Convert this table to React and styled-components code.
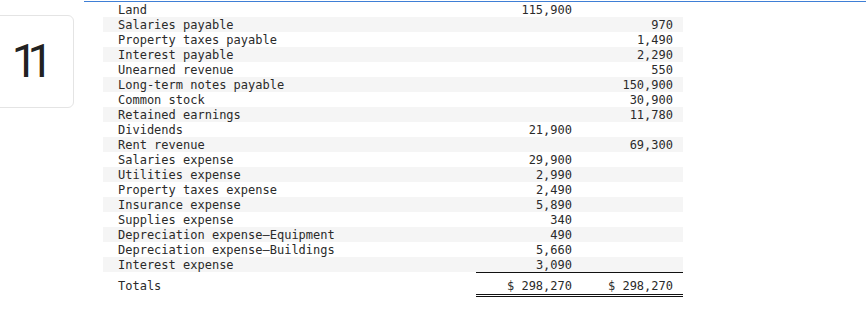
import React from "react";
import styled, { createGlobalStyle } from "styled-components";

const Global = createGlobalStyle`
  html, body { margin: 0; padding: 0; background: #fff; }
  body { width: 866px; height: 312px; overflow: hidden; }
`;

const Page = styled.div`
  display: flex;
  align-items: flex-start;
  gap: 10px;
  width: 866px;
  height: 312px;
`;

const NumberBox = styled.div`
  flex: 0 0 auto;
  width: 83px;
  height: 93px;
  margin-top: 15px;
  margin-left: -9px;
  box-sizing: border-box;
  border: 1px solid #e4e4e4;
  border-radius: 6px;
  display: flex;
  align-items: center;
  justify-content: center;
  font-family: Roboto, "Liberation Sans", Arial, sans-serif;
  font-size: 46px;
  letter-spacing: -10px;
  color: #222;
  padding-right: 10px;
  padding-bottom: 1px;
`;

const Panel = styled.div`
  flex: 1;
  margin-top: 1px;
  border-top: 1px solid #3f7fd6;
`;

const Table = styled.div`
  width: 580px;
  margin-left: 19px;
  font-family: "DejaVu Sans Mono", "Liberation Mono", monospace;
  font-size: 12px;
  color: #2a2a2a;
`;

const Row = styled.div`
  display: grid;
  grid-template-columns: 373px 104px 103px;
  box-sizing: border-box;
  height: ${(p) => (p.$total ? "21px" : "15px")};
  padding-top: 1px;
  line-height: 15px;
  background: ${(p) => (p.$striped ? "#f5f5f5" : "transparent")};
  white-space: pre;
`;

const Label = styled.div`
  padding-left: 15px;
  padding-top: ${(p) => (p.$total ? "6px" : "0")};
`;

const Amount = styled.div`
  text-align: right;
  padding-right: ${(p) => (p.$last ? "10px" : "8px")};
  box-sizing: border-box;
  padding-top: ${(p) => (p.$total ? "6px" : "0")};
  margin-top: ${(p) => (p.$total ? "-1px" : "0")};
  border-top: ${(p) => (p.$total ? "1px solid #111" : "none")};
  border-bottom: ${(p) => (p.$total ? "3px double #111" : "none")};
  height: ${(p) => (p.$total ? "25px" : "auto")};
`;

const rows = [
  ["Land", "115,900", ""],
  ["Salaries payable", "", "970"],
  ["Property taxes payable", "", "1,490"],
  ["Interest payable", "", "2,290"],
  ["Unearned revenue", "", "550"],
  ["Long-term notes payable", "", "150,900"],
  ["Common stock", "", "30,900"],
  ["Retained earnings", "", "11,780"],
  ["Dividends", "21,900", ""],
  ["Rent revenue", "", "69,300"],
  ["Salaries expense", "29,900", ""],
  ["Utilities expense", "2,990", ""],
  ["Property taxes expense", "2,490", ""],
  ["Insurance expense", "5,890", ""],
  ["Supplies expense", "340", ""],
  ["Depreciation expense\u2014Equipment", "490", ""],
  ["Depreciation expense\u2014Buildings", "5,660", ""],
  ["Interest expense", "3,090", ""],
];

export default function App() {
  return (
    <>
      <Global />
      <Page>
        <NumberBox>11</NumberBox>
        <Panel>
          <Table>
            {rows.map(([label, dr, cr], i) => (
              <Row key={label} $striped={i % 2 === 1}>
                <Label>{label}</Label>
                <Amount>{dr}</Amount>
                <Amount $last>{cr}</Amount>
              </Row>
            ))}
            <Row $total>
              <Label $total>Totals</Label>
              <Amount $total>$ 298,270</Amount>
              <Amount $total $last>$ 298,270</Amount>
            </Row>
          </Table>
        </Panel>
      </Page>
    </>
  );
}
